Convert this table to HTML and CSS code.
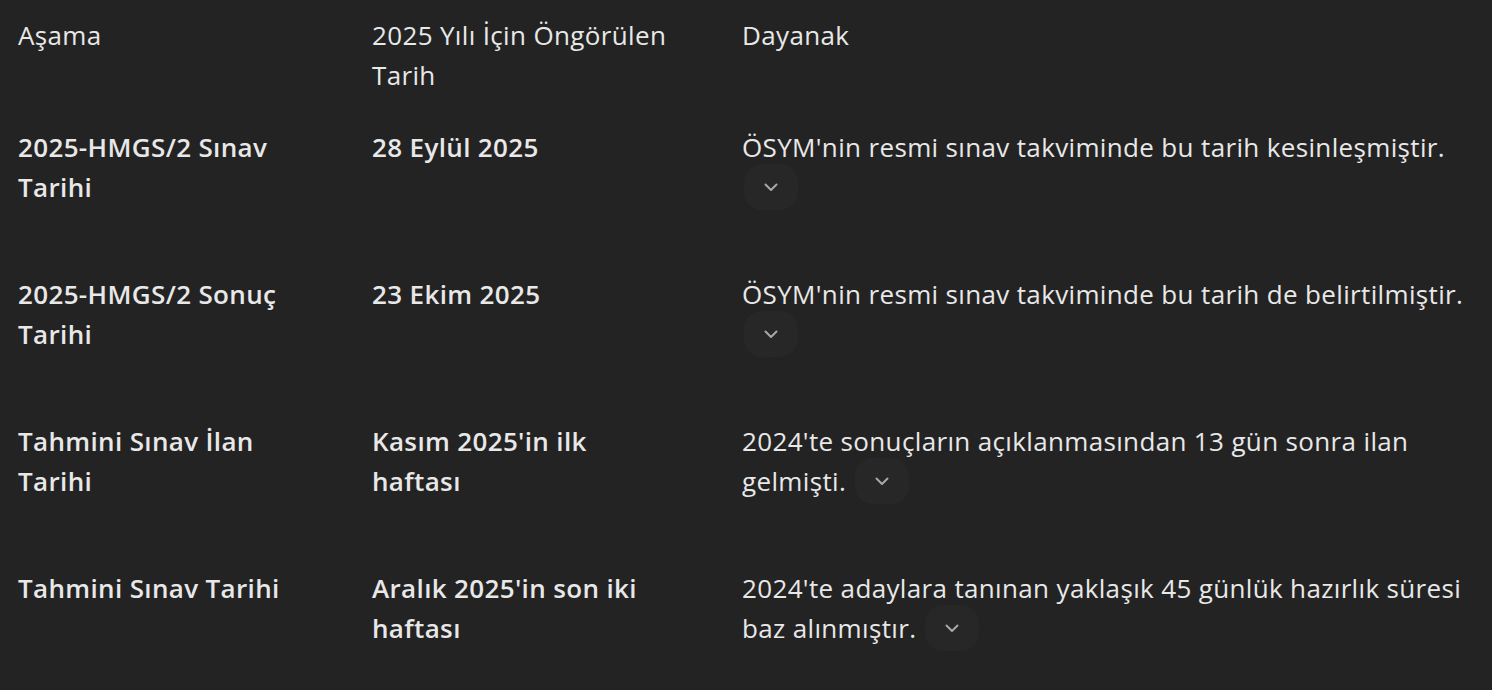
FILE: index.html
```html
<!DOCTYPE html>
<html lang="tr">
<head>
    <meta charset="UTF-8">
    <meta name="viewport" content="width=device-width, initial-scale=1.0">
    <title>2025 HMGS Takvimi</title>
    <link rel="stylesheet" href="styles.css">
</head>
<body>

<div class="table">
    <div class="row head">
        <div class="cell stage">Aşama</div>
        <div class="cell date">2025 Yılı İçin Öngörülen Tarih</div>
        <div class="cell">Dayanak</div>
    </div>
    <div class="row">
        <div class="cell stage strong">2025-HMGS/2 Sınav Tarihi</div>
        <div class="cell date strong">28 Eylül 2025</div>
        <div class="cell">ÖSYM'nin resmi sınav takviminde bu tarih kesinleşmiştir. <span class="chip"><svg viewBox="0 0 14 9" width="14" height="9"><path d="M1.5 1.5 7 7l5.5-5.5" /></svg></span></div>
    </div>
    <div class="row">
        <div class="cell stage strong">2025-HMGS/2 Sonuç Tarihi</div>
        <div class="cell date strong">23 Ekim 2025</div>
        <div class="cell">ÖSYM'nin resmi sınav takviminde bu tarih de belirtilmiştir. <span class="chip"><svg viewBox="0 0 14 9" width="14" height="9"><path d="M1.5 1.5 7 7l5.5-5.5" /></svg></span></div>
    </div>
    <div class="row">
        <div class="cell stage strong">Tahmini Sınav İlan Tarihi</div>
        <div class="cell date strong">Kasım 2025'in ilk haftası</div>
        <div class="cell">2024'te sonuçların açıklanmasından 13 gün sonra ilan gelmişti. <span class="chip"><svg viewBox="0 0 14 9" width="14" height="9"><path d="M1.5 1.5 7 7l5.5-5.5" /></svg></span></div>
    </div>
    <div class="row">
        <div class="cell stage strong">Tahmini Sınav Tarihi</div>
        <div class="cell date strong">Aralık 2025'in son iki haftası</div>
        <div class="cell">2024'te adaylara tanınan yaklaşık 45 günlük hazırlık süresi baz alınmıştır. <span class="chip"><svg viewBox="0 0 14 9" width="14" height="9"><path d="M1.5 1.5 7 7l5.5-5.5" /></svg></span></div>
    </div>
</div>

</body>
</html>
```

FILE: styles.css
```css
body {
    margin: 0;
    background-color: #232323;
    color: #e8e8e8;
    font-family: 'Open Sans', 'Noto Sans', sans-serif;
    font-size: 26px;
    line-height: 40px;
    letter-spacing: 0.35px;
    overflow: hidden;
}
.table {
    padding: 15px 18px 0 18px;
}
.row {
    display: grid;
    grid-template-columns: 354px 370px 1fr;
    padding: 16px 0 51px 0;
}
.row.head {
    padding: 0 0 16px 0;
}
.stage {
    padding-right: 64px;
}
.date {
    padding-right: 67px;
}
.strong {
    font-weight: 600;
}
.chip {
    display: inline-flex;
    align-items: center;
    justify-content: center;
    width: 54px;
    height: 46px;
    margin: -3px 0 -3px 2px;
    vertical-align: top;
    border-radius: 18px;
    background-color: #272727;
}
.chip svg {
    fill: none;
    stroke: #a8a8a8;
    stroke-width: 2;
    stroke-linecap: round;
    stroke-linejoin: round;
}
```
